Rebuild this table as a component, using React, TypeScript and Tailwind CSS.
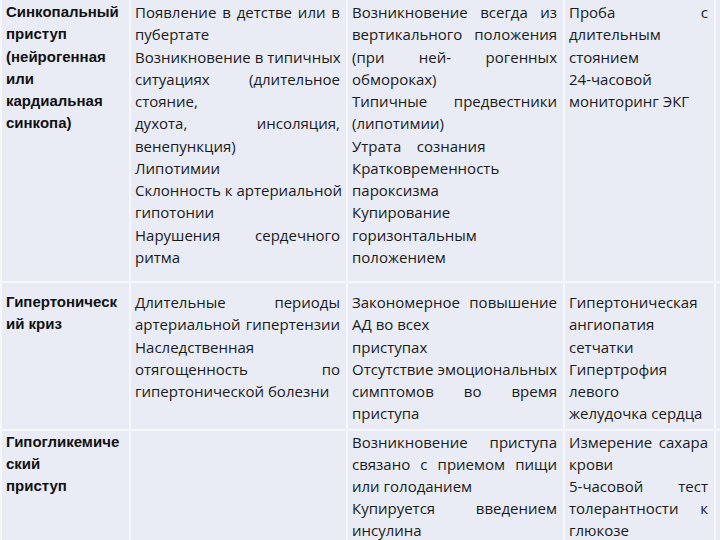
import React from "react";

type Line = { t: string; j?: boolean };
type Cell = Line[];

const L = (t: string, j = false): Line => ({ t, j });

const rows: { h: string; pt: string; lh: string; cells: Cell[] }[] = [
  {
    h: "h-[281px]",
    pt: "pt-[1px]",
    lh: "leading-[22.25px]",
    cells: [
      [L("Синкопальный"), L("приступ"), L("(нейрогенная"), L("или"), L("кардиальная"), L("синкопа)")],
      [
        L("Появление в детстве или в", true),
        L("пубертате"),
        L("Возникновение в типичных", true),
        L("ситуациях (длительное", true),
        L("стояние,"),
        L("духота, инсоляция,", true),
        L("венепункция)"),
        L("Липотимии"),
        L("Склонность к артериальной", true),
        L("гипотонии"),
        L("Нарушения сердечного", true),
        L("ритма"),
      ],
      [
        L("Возникновение всегда из", true),
        L("вертикального положения", true),
        L("(при ней- рогенных", true),
        L("обмороках)"),
        L("Типичные предвестники", true),
        L("(липотимии)"),
        L("Утрата\u00a0\u00a0\u00a0 сознания"),
        L("Кратковременность"),
        L("пароксизма"),
        L("Купирование"),
        L("горизонтальным"),
        L("положением"),
      ],
      [L("Проба с", true), L("длительным"), L("стоянием"), L("24-часовой"), L("мониторинг ЭКГ")],
    ],
  },
  {
    h: "h-[146px]",
    pt: "pt-[8px]",
    lh: "leading-[22.25px]",
    cells: [
      [L("Гипертоническ"), L("ий криз")],
      [
        L("Длительные периоды", true),
        L("артериальной гипертензии", true),
        L("Наследственная"),
        L("отягощенность по", true),
        L("гипертонической болезни"),
      ],
      [
        L("Закономерное повышение", true),
        L("АД во всех"),
        L("приступах"),
        L("Отсутствие эмоциональных", true),
        L("симптомов во время", true),
        L("приступа"),
      ],
      [L("Гипертоническая"), L("ангиопатия"), L("сетчатки"), L("Гипертрофия"), L("левого"), L("желудочка сердца")],
    ],
  },
  {
    h: "h-[110px]",
    pt: "pt-0",
    lh: "leading-[22px]",
    cells: [
      [L("Гипогликемиче"), L("ский"), L("приступ")],
      [],
      [
        L("Возникновение приступа", true),
        L("связано с приемом пищи", true),
        L("или голоданием"),
        L("Купируется введением", true),
        L("инсулина"),
      ],
      [L("Измерение сахара", true), L("крови"), L("5-часовой тест", true), L("толерантности к", true), L("глюкозе")],
    ],
  },
];

function CellView({ lines, bold, pt, lh }: { lines: Cell; bold: boolean; pt: string; lh: string }) {
  return (
    <div className={`bg-[#e9ecf5] ${pt} pl-[4px] pr-[6px] overflow-hidden`}>
      {lines.map((l, i) => (
        <div
          key={i}
          className={`whitespace-nowrap ${lh} ${
            bold ? "font-bold font-['Liberation_Sans',Arial,sans-serif] text-[#111]" : ""
          } ${l.j ? "text-justify [text-align-last:justify]" : "text-left"}`}
        >
          {l.t}
        </div>
      ))}
    </div>
  );
}

export default function App() {
  return (
    <div
      className="w-[720px] h-[540px] overflow-hidden bg-[#f6f7fb] pl-[2px] flex flex-col gap-[2px] text-[#1a1a1a] text-[15px] font-['Open_Sans','Noto_Sans',sans-serif]"
    >
      {rows.map((r, ri) => (
        <div
          key={ri}
          className={`grid grid-cols-[127px_215px_215px_149px_4px] gap-[2px] ${r.h} shrink-0`}
        >
          {r.cells.map((c, ci) => (
            <CellView key={ci} lines={c} bold={ci === 0} pt={r.pt} lh={r.lh} />
          ))}
          <div className="bg-[#e9ecf5]" />
        </div>
      ))}
    </div>
  );
}
